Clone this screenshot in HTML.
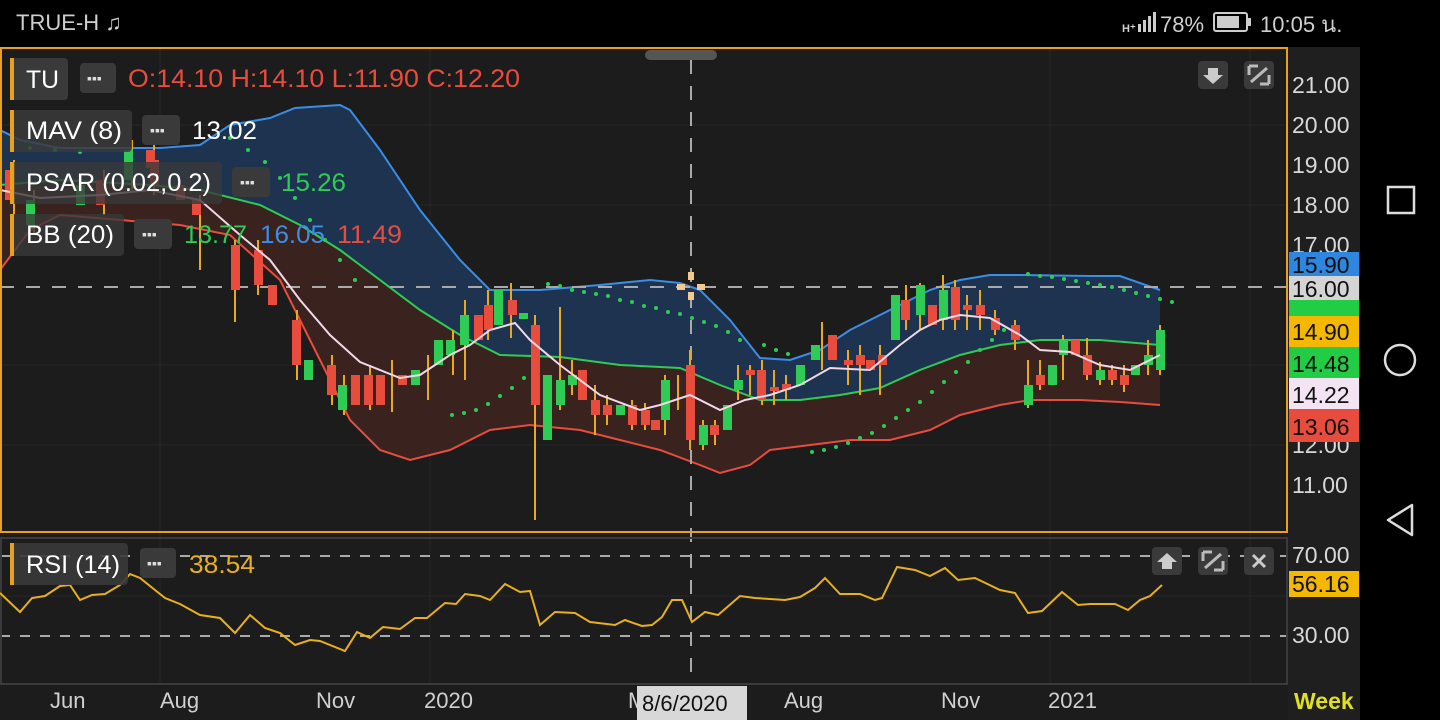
<!DOCTYPE html>
<html><head><meta charset="utf-8"><style>
html,body{margin:0;padding:0;background:#000;width:1440px;height:720px;overflow:hidden;font-family:"Liberation Sans","Noto Sans CJK SC",sans-serif}
</style></head><body>
<svg width="1440" height="720" viewBox="0 0 1440 720" xmlns="http://www.w3.org/2000/svg" font-family="Liberation Sans, Noto Sans CJK SC, sans-serif">
<rect width="1440" height="720" fill="#000"/>
<text x="16" y="30" fill="#cfcfcf" font-size="22">TRUE-H ♫</text>
<text x="1122" y="32" fill="#cfcfcf" font-size="11" font-weight="bold">H⁺</text>
<rect x="1138" y="24" width="3" height="8" fill="#ccc"/><rect x="1143" y="20" width="3" height="12" fill="#ccc"/><rect x="1148" y="16" width="3" height="16" fill="#ccc"/><rect x="1153" y="12" width="3" height="20" fill="#ccc"/>
<text x="1160" y="32" fill="#cfcfcf" font-size="22">78%</text>
<rect x="1214" y="13" width="33" height="18" rx="2" fill="none" stroke="#ccc" stroke-width="2"/><rect x="1217" y="16" width="22" height="12" fill="#ccc"/><rect x="1248" y="18" width="3" height="8" fill="#ccc"/>
<text x="1260" y="32" fill="#cfcfcf" font-size="22">10:05 น.</text>
<rect x="0" y="47" width="1360" height="673" fill="#1c1c1c"/>
<rect x="1288" y="47" width="72" height="673" fill="#1f1f1f"/>
<g stroke="#262626" stroke-width="1">
<line x1="0" y1="125" x2="1287" y2="125"/><line x1="0" y1="205" x2="1287" y2="205"/><line x1="0" y1="365" x2="1287" y2="365"/><line x1="0" y1="445" x2="1287" y2="445"/>
<line x1="160" y1="48" x2="160" y2="684"/><line x1="430" y1="48" x2="430" y2="684"/><line x1="1250" y1="48" x2="1250" y2="684"/><line x1="1050" y1="48" x2="1050" y2="684"/>
<line x1="0" y1="596" x2="1287" y2="596"/>
</g>
<path d="M0,130 L20,140 60,148 110,148 160,148 200,145 230,125 270,118 295,108 340,105 350,110 380,150 420,210 460,260 490,290 540,290 600,285 650,280 680,283 700,290 730,320 760,358 790,360 820,350 850,330 890,310 930,290 960,280 990,275 1020,275 1090,276 1120,276 1160,290 L1160,345 1100,340 1040,340 1000,345 960,355 920,370 880,388 840,395 800,400 760,400 720,385 680,368 620,365 560,357 500,355 460,335 420,310 380,280 340,250 300,225 260,205 200,190 150,185 60,180 0,185Z" fill="#1d3350"/>
<path d="M0,185 L60,180 150,185 200,190 260,205 300,225 340,250 380,280 420,310 460,335 500,355 560,357 620,365 680,368 720,385 760,400 800,400 840,395 880,388 920,370 960,355 1000,345 1040,340 1100,340 1160,345 L1160,405 1120,402 1080,400 1030,400 1000,405 960,415 930,430 890,440 850,440 810,445 770,450 750,465 720,473 700,465 660,450 620,440 580,430 530,425 490,430 450,450 410,460 380,450 350,420 320,360 280,280 230,235 180,225 120,220 60,215 30,230 0,270Z" fill="#3a221f"/>
<polyline fill="none" stroke="#3a8ee6" stroke-width="2" points="0,130 20,140 60,148 110,148 160,148 200,145 230,125 270,118 295,108 340,105 350,110 380,150 420,210 460,260 490,290 540,290 600,285 650,280 680,283 700,290 730,320 760,358 790,360 820,350 850,330 890,310 930,290 960,280 990,275 1020,275 1090,276 1120,276 1160,290"/>
<polyline fill="none" stroke="#2ecc55" stroke-width="2" points="0,185 60,180 150,185 200,190 260,205 300,225 340,250 380,280 420,310 460,335 500,355 560,357 620,365 680,368 720,385 760,400 800,400 840,395 880,388 920,370 960,355 1000,345 1040,340 1100,340 1160,345"/>
<polyline fill="none" stroke="#e84c3d" stroke-width="2" points="0,270 30,230 60,215 120,220 180,225 230,235 280,280 320,360 350,420 380,450 410,460 450,450 490,430 530,425 580,430 620,440 660,450 700,465 720,473 750,465 770,450 810,445 850,440 890,440 930,430 960,415 1000,405 1030,400 1080,400 1120,402 1160,405"/>
<line x1="0" y1="287" x2="1287" y2="287" stroke="#aaa" stroke-width="2" stroke-dasharray="14,12"/>
<line x1="691" y1="60" x2="691" y2="680" stroke="#aaa" stroke-width="2" stroke-dasharray="14,12"/>
<g stroke="#e8a820" stroke-width="2">
<line x1="14" y1="160" x2="14" y2="215"/><line x1="34" y1="190" x2="34" y2="235"/><line x1="104" y1="170" x2="104" y2="215"/><line x1="132" y1="140" x2="132" y2="190"/><line x1="154" y1="145" x2="154" y2="195"/><line x1="200" y1="195" x2="200" y2="270"/><line x1="235" y1="240" x2="235" y2="322"/><line x1="258" y1="240" x2="258" y2="295"/><line x1="297" y1="310" x2="297" y2="380"/><line x1="332" y1="355" x2="332" y2="405"/><line x1="344" y1="375" x2="344" y2="415"/><line x1="370" y1="365" x2="370" y2="410"/><line x1="392" y1="360" x2="392" y2="412"/><line x1="428" y1="355" x2="428" y2="400"/><line x1="453" y1="330" x2="453" y2="375"/><line x1="465" y1="300" x2="465" y2="380"/><line x1="488" y1="290" x2="488" y2="340"/><line x1="511" y1="283" x2="511" y2="338"/><line x1="535" y1="315" x2="535" y2="520"/><line x1="560" y1="307" x2="560" y2="410"/><line x1="572" y1="360" x2="572" y2="395"/><line x1="595" y1="385" x2="595" y2="435"/><line x1="607" y1="395" x2="607" y2="425"/><line x1="632" y1="400" x2="632" y2="430"/><line x1="645" y1="403" x2="645" y2="430"/><line x1="665" y1="375" x2="665" y2="435"/><line x1="678" y1="375" x2="678" y2="410"/><line x1="690" y1="350" x2="690" y2="450"/><line x1="703" y1="420" x2="703" y2="450"/><line x1="715" y1="420" x2="715" y2="445"/><line x1="738" y1="365" x2="738" y2="400"/><line x1="750" y1="365" x2="750" y2="395"/><line x1="762" y1="360" x2="762" y2="405"/><line x1="774" y1="370" x2="774" y2="405"/><line x1="786" y1="375" x2="786" y2="400"/><line x1="822" y1="322" x2="822" y2="370"/><line x1="848" y1="350" x2="848" y2="385"/><line x1="860" y1="345" x2="860" y2="395"/><line x1="880" y1="345" x2="880" y2="395"/><line x1="906" y1="285" x2="906" y2="330"/><line x1="920" y1="283" x2="920" y2="330"/><line x1="943" y1="275" x2="943" y2="330"/><line x1="955" y1="280" x2="955" y2="330"/><line x1="967" y1="295" x2="967" y2="330"/><line x1="980" y1="290" x2="980" y2="330"/><line x1="995" y1="310" x2="995" y2="335"/><line x1="1015" y1="320" x2="1015" y2="350"/><line x1="1028" y1="360" x2="1028" y2="408"/><line x1="1040" y1="360" x2="1040" y2="390"/><line x1="1063" y1="335" x2="1063" y2="380"/><line x1="1087" y1="338" x2="1087" y2="380"/><line x1="1100" y1="362" x2="1100" y2="385"/><line x1="1112" y1="365" x2="1112" y2="385"/><line x1="1124" y1="365" x2="1124" y2="392"/><line x1="1148" y1="340" x2="1148" y2="375"/><line x1="1160" y1="325" x2="1160" y2="375"/>
</g>
<g fill="#e84c3d">
<rect x="5" y="170" width="9" height="30"/><rect x="96" y="180" width="9" height="25"/><rect x="146" y="150" width="9" height="18"/><rect x="150" y="160" width="9" height="25"/><rect x="176" y="185" width="9" height="15"/><rect x="192" y="200" width="9" height="15"/><rect x="231" y="245" width="9" height="45"/><rect x="254" y="250" width="9" height="35"/><rect x="268" y="285" width="9" height="20"/><rect x="292" y="320" width="9" height="45"/><rect x="327" y="365" width="9" height="30"/><rect x="351" y="375" width="9" height="30"/><rect x="364" y="375" width="9" height="30"/><rect x="376" y="375" width="9" height="30"/><rect x="398" y="375" width="9" height="10"/><rect x="474" y="315" width="9" height="25"/><rect x="484" y="305" width="9" height="25"/><rect x="508" y="300" width="9" height="15"/><rect x="531" y="325" width="9" height="80"/><rect x="578" y="370" width="9" height="30"/><rect x="591" y="400" width="9" height="15"/><rect x="603" y="405" width="9" height="10"/><rect x="628" y="405" width="9" height="20"/><rect x="641" y="410" width="9" height="15"/><rect x="651" y="420" width="9" height="10"/><rect x="686" y="365" width="9" height="75"/><rect x="710" y="425" width="9" height="10"/><rect x="746" y="370" width="9" height="5"/><rect x="757" y="370" width="9" height="30"/><rect x="770" y="387" width="9" height="4"/><rect x="782" y="384" width="9" height="6"/><rect x="828" y="335" width="9" height="25"/><rect x="844" y="360" width="9" height="5"/><rect x="856" y="355" width="9" height="10"/><rect x="866" y="360" width="9" height="10"/><rect x="878" y="355" width="9" height="10"/><rect x="901" y="300" width="9" height="20"/><rect x="928" y="305" width="9" height="20"/><rect x="951" y="287" width="9" height="33"/><rect x="963" y="305" width="9" height="5"/><rect x="976" y="305" width="9" height="10"/><rect x="991" y="318" width="9" height="12"/><rect x="1011" y="325" width="9" height="15"/><rect x="1036" y="375" width="9" height="10"/><rect x="1071" y="340" width="9" height="15"/><rect x="1083" y="355" width="9" height="20"/><rect x="1108" y="370" width="9" height="10"/><rect x="1120" y="375" width="9" height="10"/>
</g>
<g fill="#2ecc55">
<rect x="26" y="200" width="9" height="25"/><rect x="76" y="185" width="9" height="20"/><rect x="124" y="150" width="9" height="30"/><rect x="304" y="360" width="9" height="20"/><rect x="338" y="385" width="9" height="25"/><rect x="411" y="370" width="9" height="15"/><rect x="434" y="340" width="9" height="25"/><rect x="446" y="340" width="9" height="15"/><rect x="460" y="315" width="9" height="30"/><rect x="494" y="290" width="9" height="35"/><rect x="519" y="313" width="9" height="6"/><rect x="543" y="375" width="9" height="65"/><rect x="556" y="380" width="9" height="25"/><rect x="568" y="375" width="9" height="10"/><rect x="616" y="405" width="9" height="10"/><rect x="661" y="380" width="9" height="40"/><rect x="699" y="425" width="9" height="20"/><rect x="723" y="405" width="9" height="25"/><rect x="734" y="380" width="9" height="10"/><rect x="796" y="365" width="9" height="20"/><rect x="811" y="345" width="9" height="15"/><rect x="891" y="295" width="9" height="45"/><rect x="916" y="285" width="9" height="30"/><rect x="939" y="290" width="9" height="30"/><rect x="1024" y="385" width="9" height="20"/><rect x="1048" y="365" width="9" height="20"/><rect x="1059" y="340" width="9" height="15"/><rect x="1096" y="370" width="9" height="10"/><rect x="1131" y="365" width="9" height="10"/><rect x="1144" y="355" width="9" height="10"/><rect x="1156" y="330" width="9" height="40"/>
</g>
<polyline fill="none" stroke="#f0d8e8" stroke-width="2" points="0,190 40,198 100,195 150,190 200,200 240,235 270,260 300,300 330,335 360,362 400,378 420,375 450,355 470,345 490,330 515,323 530,340 560,365 600,395 640,410 660,405 690,395 720,410 745,400 770,395 800,385 830,368 870,370 900,345 920,330 940,320 960,315 990,318 1020,335 1040,350 1070,352 1100,365 1130,370 1160,355"/>
<g fill="#2ecc55">
<circle cx="30" cy="148" r="2"/><circle cx="55" cy="150" r="2"/><circle cx="80" cy="152" r="2"/><circle cx="230" cy="138" r="2"/><circle cx="248" cy="150" r="2"/><circle cx="265" cy="162" r="2"/><circle cx="280" cy="178" r="2"/><circle cx="295" cy="198" r="2"/><circle cx="310" cy="220" r="2"/><circle cx="325" cy="240" r="2"/><circle cx="340" cy="260" r="2"/><circle cx="355" cy="280" r="2"/>
<circle cx="452" cy="415" r="2"/><circle cx="464" cy="413" r="2"/><circle cx="476" cy="410" r="2"/><circle cx="488" cy="404" r="2"/><circle cx="500" cy="396" r="2"/><circle cx="512" cy="388" r="2"/><circle cx="524" cy="378" r="2"/>
<circle cx="548" cy="284" r="2"/><circle cx="560" cy="286" r="2"/><circle cx="572" cy="290" r="2"/><circle cx="584" cy="292" r="2"/><circle cx="596" cy="294" r="2"/><circle cx="608" cy="296" r="2"/><circle cx="620" cy="300" r="2"/><circle cx="632" cy="302" r="2"/><circle cx="644" cy="306" r="2"/><circle cx="656" cy="308" r="2"/><circle cx="668" cy="312" r="2"/><circle cx="680" cy="314" r="2"/><circle cx="692" cy="318" r="2"/><circle cx="704" cy="322" r="2"/><circle cx="716" cy="326" r="2"/><circle cx="728" cy="332" r="2"/><circle cx="740" cy="340" r="2"/><circle cx="764" cy="345" r="2"/><circle cx="776" cy="350" r="2"/><circle cx="788" cy="354" r="2"/>
<circle cx="812" cy="452" r="2"/><circle cx="824" cy="450" r="2"/><circle cx="836" cy="447" r="2"/><circle cx="848" cy="443" r="2"/><circle cx="860" cy="438" r="2"/><circle cx="872" cy="433" r="2"/><circle cx="884" cy="426" r="2"/><circle cx="896" cy="418" r="2"/><circle cx="908" cy="410" r="2"/><circle cx="920" cy="402" r="2"/><circle cx="932" cy="392" r="2"/><circle cx="944" cy="382" r="2"/><circle cx="956" cy="372" r="2"/><circle cx="968" cy="362" r="2"/><circle cx="980" cy="350" r="2"/><circle cx="992" cy="340" r="2"/><circle cx="1004" cy="330" r="2"/>
<circle cx="1028" cy="274" r="2"/><circle cx="1040" cy="276" r="2"/><circle cx="1052" cy="277" r="2"/><circle cx="1064" cy="279" r="2"/><circle cx="1076" cy="281" r="2"/><circle cx="1088" cy="283" r="2"/><circle cx="1100" cy="285" r="2"/><circle cx="1112" cy="287" r="2"/><circle cx="1124" cy="290" r="2"/><circle cx="1136" cy="293" r="2"/><circle cx="1148" cy="296" r="2"/><circle cx="1160" cy="299" r="2"/><circle cx="1172" cy="302" r="2"/>
</g>
<g fill="#f4c98a"><rect x="688" y="272" width="6" height="8"/><rect x="688" y="292" width="6" height="8"/><rect x="677" y="284" width="8" height="6"/><rect x="697" y="284" width="8" height="6"/></g>
<rect x="1" y="48" width="1286" height="484" fill="none" stroke="#e8a020" stroke-width="2"/>
<rect x="645" y="50" width="72" height="10" rx="5" fill="#555"/>
<g font-size="25">
<rect x="10" y="58" width="58" height="42" rx="4" fill="#3a3a3a"/><rect x="10" y="58" width="4" height="42" fill="#e8a020"/><text x="26" y="88" fill="#fff" textLength="33" lengthAdjust="spacingAndGlyphs">TU</text>
<rect x="80" y="63" width="36" height="30" rx="4" fill="#3a3a3a"/><text x="87" y="83" fill="#ddd" font-size="14" font-weight="bold">▪▪▪</text>
<text x="128" y="87" fill="#e84c3d" textLength="392" lengthAdjust="spacingAndGlyphs">O:14.10 H:14.10 L:11.90 C:12.20</text>
<rect x="10" y="110" width="122" height="42" rx="4" fill="#3a3a3a" fill-opacity="0.85"/><rect x="10" y="110" width="4" height="42" fill="#e8a020"/><text x="26" y="139" fill="#fff" textLength="96" lengthAdjust="spacingAndGlyphs">MAV (8)</text>
<rect x="142" y="115" width="38" height="30" rx="4" fill="#3a3a3a"/><text x="150" y="135" fill="#ddd" font-size="14" font-weight="bold">▪▪▪</text>
<text x="192" y="139" fill="#fff" textLength="65" lengthAdjust="spacingAndGlyphs">13.02</text>
<rect x="10" y="162" width="212" height="42" rx="4" fill="#3a3a3a" fill-opacity="0.8"/><rect x="10" y="162" width="4" height="42" fill="#e8a020"/><text x="26" y="191" fill="#fff" textLength="185" lengthAdjust="spacingAndGlyphs">PSAR (0.02,0.2)</text>
<rect x="232" y="167" width="38" height="30" rx="4" fill="#3a3a3a"/><text x="240" y="187" fill="#ddd" font-size="14" font-weight="bold">▪▪▪</text>
<text x="281" y="191" fill="#2ecc55" textLength="65" lengthAdjust="spacingAndGlyphs">15.26</text>
<rect x="10" y="214" width="114" height="42" rx="4" fill="#3a3a3a" fill-opacity="0.8"/><rect x="10" y="214" width="4" height="42" fill="#e8a020"/><text x="26" y="243" fill="#fff" textLength="88" lengthAdjust="spacingAndGlyphs">BB (20)</text>
<rect x="134" y="219" width="38" height="30" rx="4" fill="#3a3a3a"/><text x="142" y="239" fill="#ddd" font-size="14" font-weight="bold">▪▪▪</text>
<text x="184" y="243" fill="#2ecc55" textLength="63" lengthAdjust="spacingAndGlyphs">13.77</text><text x="260" y="243" fill="#3a8ee6" textLength="65" lengthAdjust="spacingAndGlyphs">16.05</text><text x="337" y="243" fill="#e84c3d" textLength="65" lengthAdjust="spacingAndGlyphs">11.49</text>
</g>
<rect x="1198" y="61" width="30" height="28" rx="4" fill="#3a3a3a"/><path d="M1208,68 h10 v7 h5 l-10,9 l-10,-9 h5z" fill="#ccc"/>
<rect x="1244" y="61" width="30" height="28" rx="4" fill="#3a3a3a"/><path d="M1249,66 h9 M1249,66 v9 M1269,84 h-9 M1269,84 v-9 M1251,82 l16,-14" stroke="#bbb" stroke-width="3" fill="none"/>
<g font-size="23" fill="#d8d8d8">
<text x="1292" y="93">21.00</text><text x="1292" y="133">20.00</text><text x="1292" y="173">19.00</text><text x="1292" y="213">18.00</text><text x="1292" y="253">17.00</text><text x="1292" y="453">12.00</text><text x="1292" y="493">11.00</text>
</g>
<rect x="1289" y="252" width="70" height="24" fill="#2e86de"/><text x="1292" y="273" font-size="23" fill="#111">15.90</text>
<rect x="1289" y="300" width="70" height="16" fill="#22cc44"/>
<rect x="1289" y="276" width="70" height="24" fill="#d4d4d4"/><text x="1292" y="297" font-size="23" fill="#111">16.00</text>
<rect x="1289" y="316" width="70" height="31" fill="#f5b800"/><text x="1292" y="340" font-size="23" fill="#111">14.90</text>
<rect x="1289" y="347" width="70" height="31" fill="#22cc44"/><text x="1292" y="372" font-size="23" fill="#111">14.48</text>
<rect x="1289" y="378" width="70" height="31" fill="#f3e3f3"/><text x="1292" y="403" font-size="23" fill="#111">14.22</text>
<rect x="1289" y="409" width="70" height="33" fill="#e84c3d"/><text x="1292" y="435" font-size="23" fill="#111">13.06</text>
<line x1="0" y1="556" x2="1287" y2="556" stroke="#aaa" stroke-width="2" stroke-dasharray="10,10"/>
<line x1="0" y1="636" x2="1287" y2="636" stroke="#aaa" stroke-width="2" stroke-dasharray="10,10"/>
<rect x="1" y="538" width="1286" height="146" fill="none" stroke="#3a3a3a" stroke-width="2"/>
<polyline fill="none" stroke="#e8b020" stroke-width="2" points="0,593 20,612 32,598 45,596 60,586 70,585 80,600 92,595 105,594 120,585 130,574 140,578 165,598 180,604 200,615 220,618 235,633 250,615 265,628 280,633 295,645 310,640 320,641 345,651 357,632 370,638 383,627 400,629 415,618 427,618 445,603 456,604 465,594 480,596 490,600 505,584 520,592 530,591 540,625 555,612 575,613 590,622 615,625 625,620 642,626 652,625 662,617 672,600 682,600 692,622 705,612 718,615 740,596 755,598 770,599 785,600 800,597 815,588 825,578 840,594 860,594 875,600 882,598 897,567 915,570 930,576 945,568 958,580 975,578 1000,590 1015,593 1028,613 1042,611 1062,592 1078,605 1090,604 1115,604 1128,610 1140,600 1150,596 1162,585"/>
<g font-size="25">
<rect x="10" y="543" width="118" height="42" rx="4" fill="#3a3a3a" fill-opacity="0.9"/><rect x="10" y="543" width="4" height="42" fill="#e8a020"/><text x="26" y="573" fill="#fff" textLength="94" lengthAdjust="spacingAndGlyphs">RSI (14)</text>
<rect x="140" y="548" width="36" height="30" rx="4" fill="#3a3a3a"/><text x="147" y="568" fill="#ddd" font-size="14" font-weight="bold">▪▪▪</text>
<text x="189" y="573" fill="#e8b020" textLength="66" lengthAdjust="spacingAndGlyphs">38.54</text>
</g>
<rect x="1152" y="547" width="30" height="28" rx="4" fill="#3a3a3a"/><path d="M1167,553 l10,9 h-5 v7 h-10 v-7 h-5z" fill="#ccc"/>
<rect x="1198" y="547" width="30" height="28" rx="4" fill="#3a3a3a"/><path d="M1203,552 h9 M1203,552 v9 M1223,570 h-9 M1223,570 v-9 M1205,568 l16,-14" stroke="#bbb" stroke-width="3" fill="none"/>
<rect x="1244" y="547" width="30" height="28" rx="4" fill="#3a3a3a"/><path d="M1253,555 l12,12 M1265,555 l-12,12" stroke="#ccc" stroke-width="3"/>
<text x="1292" y="563" font-size="23" fill="#d8d8d8">70.00</text>
<rect x="1289" y="571" width="70" height="26" fill="#f5b800"/><text x="1292" y="592" font-size="23" fill="#111">56.16</text>
<text x="1292" y="643" font-size="23" fill="#d8d8d8">30.00</text>
<g font-size="22" fill="#d0d0d0">
<text x="50" y="708">Jun</text><text x="160" y="708">Aug</text><text x="316" y="708">Nov</text><text x="424" y="708">2020</text><text x="628" y="708">M</text><text x="784" y="708">Aug</text><text x="941" y="708">Nov</text><text x="1048" y="708">2021</text>
</g>
<rect x="637" y="686" width="110" height="34" fill="#d8d8d8"/><text x="642" y="711" font-size="22" fill="#111">8/6/2020</text>
<text x="1294" y="709" font-size="23" font-weight="bold" fill="#e0e020">Week</text>
<rect x="1388" y="187" width="26" height="26" fill="none" stroke="#ddd" stroke-width="2.5"/>
<circle cx="1400" cy="360" r="15" fill="none" stroke="#ddd" stroke-width="2.5"/>
<path d="M1412,505 L1388,520 L1412,535Z" fill="none" stroke="#ddd" stroke-width="2.5" stroke-linejoin="round"/>
</svg>
</body></html>
